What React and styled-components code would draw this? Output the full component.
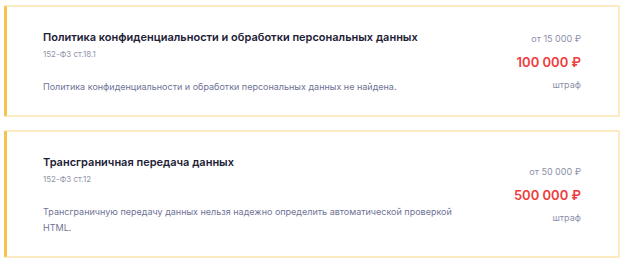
import React from 'react';
import styled, { createGlobalStyle } from 'styled-components';

const GlobalStyle = createGlobalStyle`
  body {
    margin: 0;
    background: #ffffff;
    font-family: Inter, "Noto Sans", sans-serif;
  }
`;

const List = styled.div`
  display: flex;
  flex-direction: column;
  gap: 13px;
  padding: 5px 4px;
`;

const Card = styled.div`
  display: flex;
  justify-content: space-between;
  align-items: center;
  background: #fff;
  border: 2px solid #fcebc2;
  border-left: 3px solid #f3c24f;
  border-radius: 2px;
  padding: 22px 37px 20px 36px;
`;

const Info = styled.div`
  max-width: 415px;
`;

const Title = styled.h3`
  margin: 0;
  font-size: 11px;
  line-height: 16px;
  font-weight: 600;
  color: #1d2136;
`;

const Law = styled.div`
  margin-top: 3px;
  font-size: 8px;
  line-height: 12px;
  color: #9094aa;
`;

const Desc = styled.p`
  margin: 19px 0 0;
  font-size: 9px;
  line-height: 16px;
  color: #6f7396;
`;

const Fine = styled.div`
  display: flex;
  flex-direction: column;
  align-items: flex-end;
  gap: 7px;
`;

const Small = styled.div`
  font-size: 9px;
  line-height: 14px;
  color: #8c90a8;
`;

const Amount = styled.div`
  font-size: 13px;
  line-height: 18px;
  font-weight: 600;
  color: #f03c3c;
`;

const items = [
  {
    title: 'Политика конфиденциальности и обработки персональных данных',
    law: '152-ФЗ ст.18.1',
    desc: 'Политика конфиденциальности и обработки персональных данных не найдена.',
    from: 'от 15 000 ₽',
    amount: '100 000 ₽',
  },
  {
    title: 'Трансграничная передача данных',
    law: '152-ФЗ ст.12',
    desc: 'Трансграничную передачу данных нельзя надежно определить автоматической проверкой HTML.',
    from: 'от 50 000 ₽',
    amount: '500 000 ₽',
  },
];

export default function App() {
  return (
    <>
      <GlobalStyle />
      <List>
        {items.map((it) => (
          <Card key={it.law}>
            <Info>
              <Title>{it.title}</Title>
              <Law>{it.law}</Law>
              <Desc>{it.desc}</Desc>
            </Info>
            <Fine>
              <Small>{it.from}</Small>
              <Amount>{it.amount}</Amount>
              <Small>штраф</Small>
            </Fine>
          </Card>
        ))}
      </List>
    </>
  );
}
